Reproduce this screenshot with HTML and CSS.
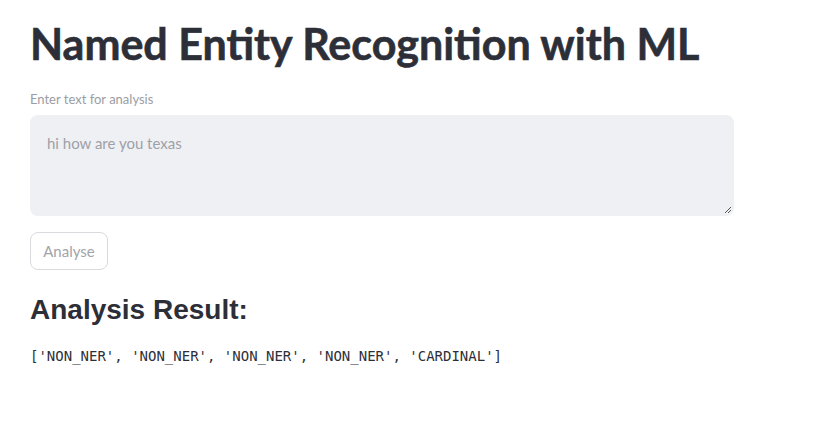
FILE: index.html
```html
<!DOCTYPE html>
<html>
<head>
<meta charset="utf-8">
<link rel="stylesheet" href="styles.css">
</head>
<body>
<main class="app">
  <h1 class="title">Named Entity Recognition with ML</h1>
  <div class="field">
    <label class="label">Enter text for analysis</label>
    <div class="textarea">
      <span class="value">hi how are you texas</span>
      <svg class="grip" width="8" height="8" viewBox="0 0 8 8"><path d="M7 1 L1 7 M7 4 L4 7" stroke="#555" stroke-width="1" fill="none"/></svg>
    </div>
  </div>
  <button class="btn">Analyse</button>
  <h2 class="result-title">Analysis Result:</h2>
  <pre class="result">['NON_NER', 'NON_NER', 'NON_NER', 'NON_NER', 'CARDINAL']</pre>
</main>
</body>
</html>
```
FILE: styles.css
```css
html, body {
  margin: 0;
  padding: 0;
  background: #ffffff;
}
.app {
  padding: 14px 30px 0 30px;
  width: 704px;
  display: flex;
  flex-direction: column;
  align-items: flex-start;
  font-family: "Lato", "Open Sans", sans-serif;
}
.title {
  margin: 0;
  font-family: "Lato", sans-serif;
  font-weight: 700;
  font-size: 43px;
  line-height: 60px;
  color: #2d2f38;
  -webkit-text-stroke: 0.6px #2d2f38;
}
.field {
  margin-top: 16px;
  width: 704px;
  display: flex;
  flex-direction: column;
}
.label {
  font-size: 13px;
  line-height: 18px;
  color: #9b9da4;
  margin-bottom: 7px;
}
.textarea {
  position: relative;
  height: 101px;
  background: #eff0f4;
  border-radius: 8px;
  padding: 18px 17px;
  box-sizing: border-box;
}
.value {
  font-size: 15px;
  color: #9ea0a7;
}
.grip {
  position: absolute;
  right: 2px;
  bottom: 2px;
}
.btn {
  margin-top: 16px;
  height: 38px;
  width: 78px;
  background: #fff;
  border: 1px solid #d9dade;
  border-radius: 8px;
  font-family: "Lato", sans-serif;
  font-size: 15px;
  color: #a2a4aa;
  padding: 0;
}
.result-title {
  margin: 22px 0 0 0;
  font-family: "Liberation Sans", Arial, sans-serif;
  font-weight: 700;
  font-size: 28px;
  line-height: 36px;
  color: #2d2f38;
}
.result {
  margin: 18px 0 0 0;
  font-family: "DejaVu Sans Mono", monospace;
  font-size: 14px;
  line-height: 20px;
  color: #2d2f38;
}
```
